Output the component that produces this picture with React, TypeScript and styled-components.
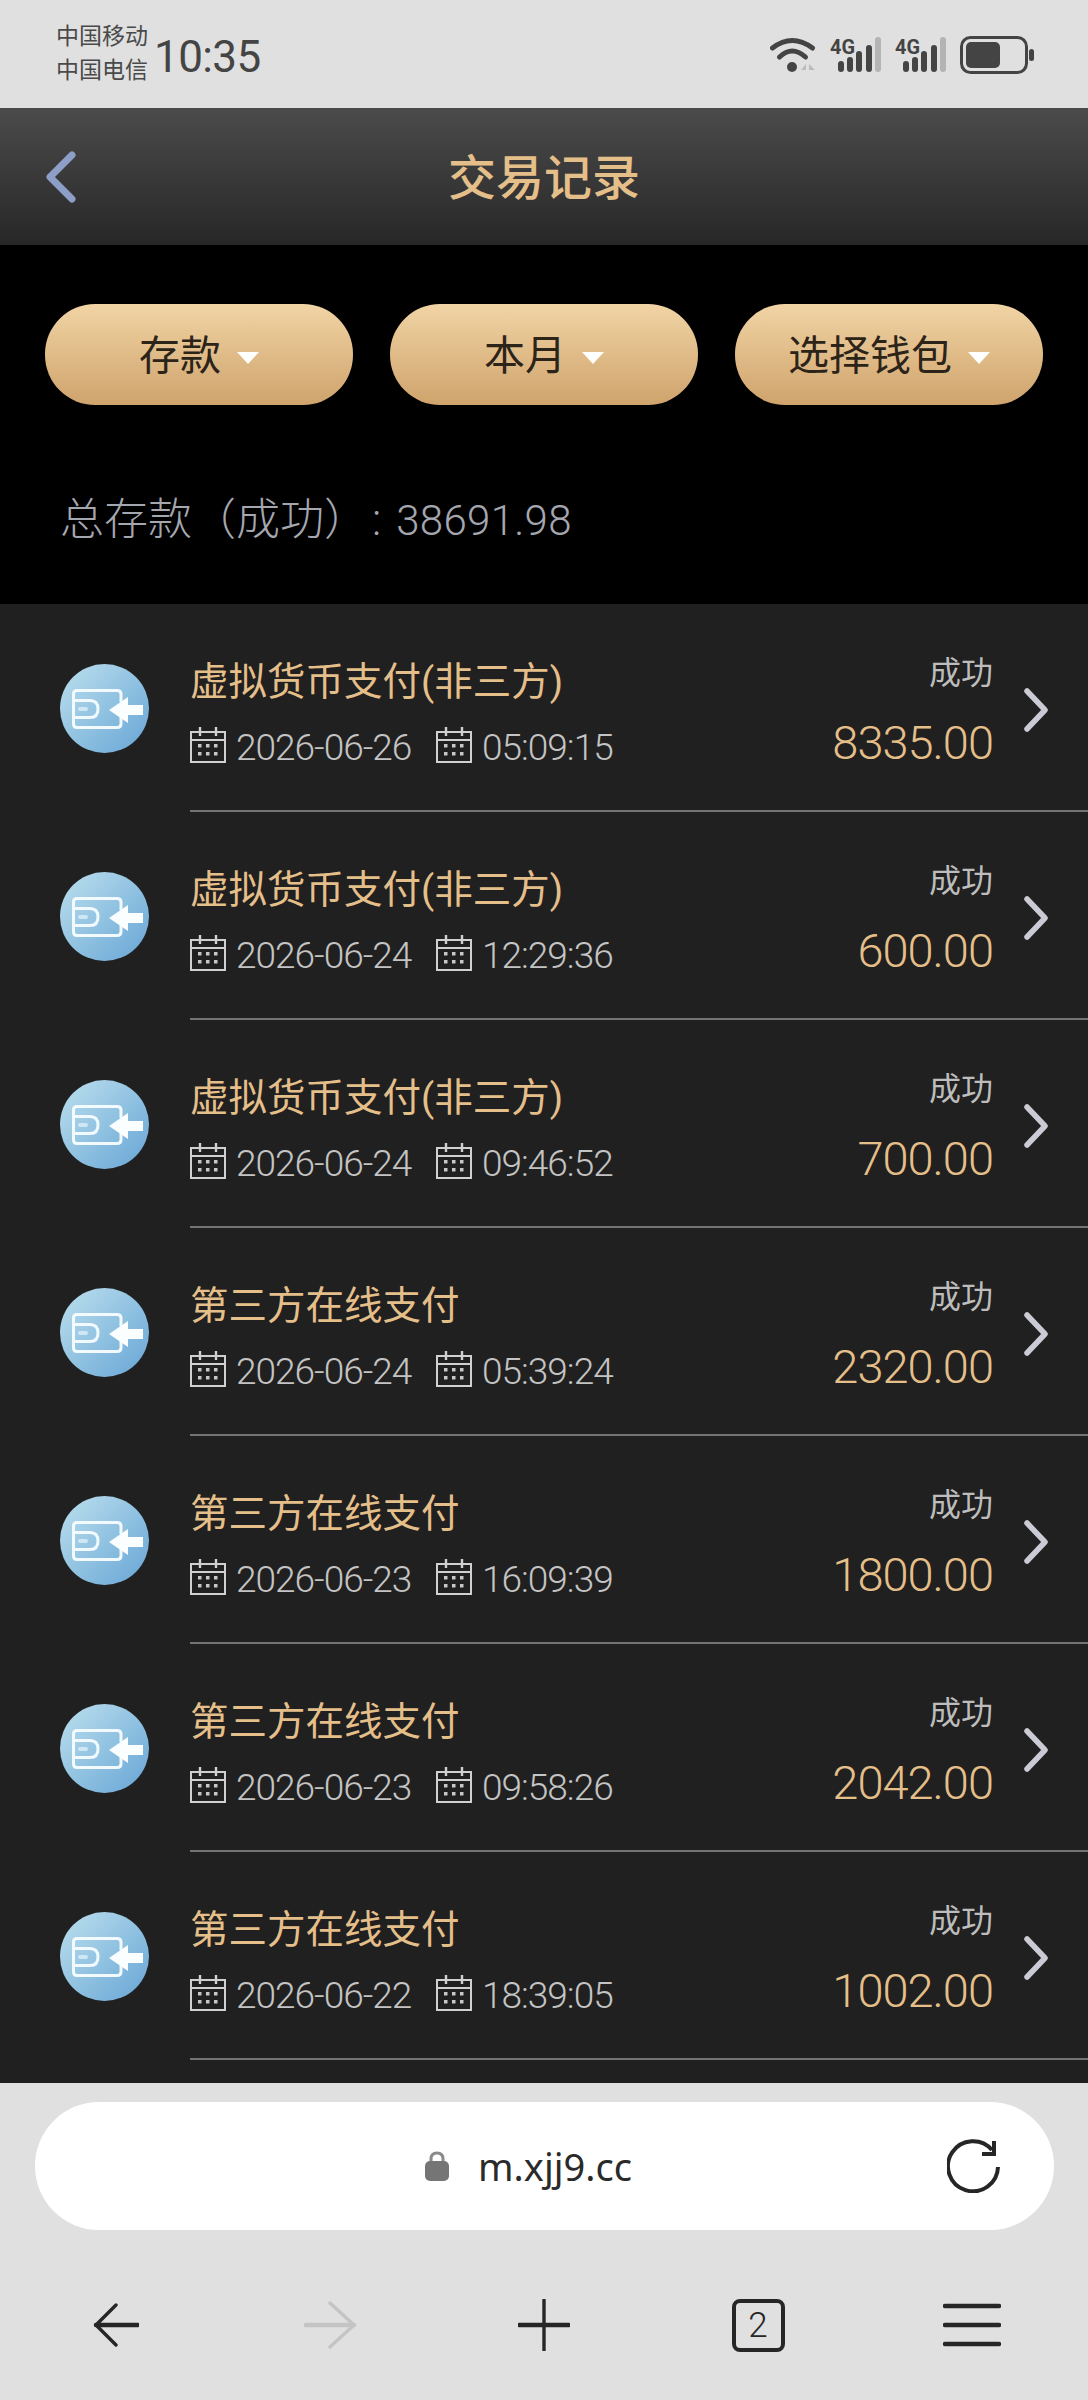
import React from 'react';
import styled, {createGlobalStyle} from 'styled-components';

const GlobalStyle = createGlobalStyle`
  html, body { margin: 0; padding: 0; background: #000; }
  * { box-sizing: border-box; }
  body { font-family: Roboto, "Noto Sans CJK SC", sans-serif; }
`;

const Page = styled.div`
  width: 1088px;
  height: 2400px;
  display: flex;
  flex-direction: column;
  overflow: hidden;
`;

const StatusBar = styled.div`
  height: 108px;
  background: #e0e0e0;
  color: #444;
  display: flex;
  align-items: center;
  padding: 0 54px 0 56px;
`;
const Carriers = styled.div`
  font-size: 23px;
  line-height: 34px;
  width: 100px;
  color: #4a4a4a;
`;
const Clock = styled.div`
  font-size: 44px;
  letter-spacing: -0.6px;
  color: #444;
  margin: 6px 0 0 -2px;
`;
const StatusIcons = styled.div`
  margin-left: auto;
  display: flex;
  align-items: center;
  gap: 14px;
  margin-top: 2px;
`;
const SignalSvg = styled.svg`
  margin-top: -8px;
`;

const Header = styled.div`
  height: 137px;
  background: linear-gradient(#4b4b4b, #272727);
  display: flex;
  align-items: center;
  justify-content: center;
  position: relative;
`;
const BackButton = styled.div`
  position: absolute;
  left: 45px;
  top: 42px;
  display: flex;
`;
const Title = styled.h1`
  margin: -6px 0 0;
  font-size: 48px;
  font-weight: 500;
  color: #e5bf89;
`;

const FilterPanel = styled.div`
  background: #000;
  height: 359px;
  padding: 59px 45px 0;
`;
const Filters = styled.div`
  display: flex;
  justify-content: space-between;
`;
const FilterButton = styled.div`
  width: 308px;
  height: 101px;
  border-radius: 50px;
  background: linear-gradient(#f1d4a5, #cfa36c);
  color: #2c2319;
  font-size: 41px;
  display: flex;
  align-items: center;
  justify-content: center;
  gap: 16px;
  padding-bottom: 5px;
`;
const Caret = styled.span`
  width: 0;
  height: 0;
  border-left: 11px solid transparent;
  border-right: 11px solid transparent;
  border-top: 12px solid #fff;
  margin-top: 11px;
`;
const Summary = styled.div`
  margin: 85px 0 0 15px;
  font-size: 44px;
  line-height: 60px;
  font-weight: 300;
  color: #a5a7b0;
  display: flex;
  align-items: baseline;
`;
const SummaryColon = styled.span`
  margin-left: 4px;
`;
const SummaryValue = styled.span`
  font-size: 42px;
  letter-spacing: 0.3px;
  margin-left: 15px;
`;

const List = styled.div`
  flex: 1;
  background: #202020;
  overflow: hidden;
`;
const Row = styled.div`
  display: flex;
  padding-left: 60px;
`;
const CoinIcon = styled.div`
  width: 89px;
  height: 89px;
  margin: 60px 41px 0 0;
  flex-shrink: 0;
  border-radius: 50%;
  background: linear-gradient(135deg, #bde0ee, #66a5d5);
  display: flex;
`;
const RowBody = styled.div`
  flex: 1;
  height: 208px;
  border-bottom: 2px solid #747474;
  display: flex;
`;
const RowInfo = styled.div`
  flex: 1;
  padding-top: 52px;
`;
const RowName = styled.div`
  font-size: 38.5px;
  line-height: 52px;
  color: #e5bf89;
`;
const RowMeta = styled.div`
  display: flex;
  align-items: center;
  margin-top: 12px;
  color: #c4c4c4;
  font-size: 37px;
  font-weight: 300;
  line-height: 44px;
  letter-spacing: -1px;
  white-space: nowrap;
`;
const MetaDate = styled.span`
  margin: 6px 24px 0 10px;
  width: 176px;
`;
const MetaTime = styled.span`
  margin: 6px 0 0 10px;
`;
const RowSide = styled.div`
  width: 200px;
  display: flex;
  flex-direction: column;
  align-items: flex-end;
  padding-top: 47px;
`;
const RowStatus = styled.div`
  font-size: 32px;
  line-height: 44px;
  color: #bdbdbd;
`;
const RowAmount = styled.div`
  font-size: 47px;
  font-weight: 300;
  line-height: 54px;
  letter-spacing: -1px;
  color: #e5bf89;
  margin-top: 21px;
`;
const RowChevron = styled.div`
  width: 95px;
  padding: 84px 0 0 31px;
`;

const BrowserBar = styled.div`
  height: 317px;
  background: #e0e0e0;
  padding-top: 19px;
`;
const UrlBar = styled.div`
  height: 128px;
  margin: 0 34px 0 35px;
  border-radius: 64px;
  background: #fff;
  display: flex;
  align-items: center;
  justify-content: center;
  position: relative;
  gap: 29px;
  padding-right: 32px;
`;
const UrlText = styled.span`
  font-family: "Noto Sans", sans-serif;
  font-size: 38px;
  color: #2a2a2a;
`;
const ReloadButton = styled.div`
  position: absolute;
  right: 53px;
  top: 37px;
  display: flex;
`;
const BrowserNav = styled.div`
  display: flex;
  padding: 67px 9px 0;
`;
const NavItem = styled.div`
  width: 214px;
  height: 56px;
  display: flex;
  align-items: center;
  justify-content: center;
`;
const TabCount = styled.div`
  width: 53px;
  height: 53px;
  border: 4px solid #262626;
  border-radius: 8px;
  display: flex;
  align-items: center;
  justify-content: center;
  font-size: 35px;
  font-weight: 300;
  color: #262626;
`;

const WifiIcon = () => (
  <svg width="46" height="36" viewBox="0 0 46 36" fill="none">
    <path d="M2.5 11 Q22 -4 42.5 11" stroke="#444" strokeWidth="5" strokeLinecap="round" />
    <path d="M9.5 20 Q22 8 35.5 20" stroke="#444" strokeWidth="5" strokeLinecap="round" />
    <circle cx="22" cy="30" r="5" fill="#444" />
    <path d="M36 27 L31 33 H36 Z M39 27 V33 H45 Z" fill="#bcbcbc" />
  </svg>
);

const SignalIcon = () => (
  <SignalSvg width="51" height="44" viewBox="0 -8 51 44">
    <text x="0" y="17" fontFamily="Roboto" fontSize="21" fontWeight="700" fill="#444" textLength="25" lengthAdjust="spacingAndGlyphs">4G</text>
    <rect x="8" y="24" width="6" height="11" rx="3" fill="#444" />
    <rect x="17" y="20" width="6" height="15" rx="3" fill="#444" />
    <rect x="26" y="14" width="6" height="21" rx="3" fill="#444" />
    <rect x="36" y="8" width="6" height="27" rx="3" fill="#444" />
    <rect x="45" y="0" width="6" height="35" rx="3" fill="#b4b4b4" />
  </SignalSvg>
);

const BatteryIcon = () => (
  <svg width="74" height="38" viewBox="0 0 74 38">
    <rect x="1.5" y="1.5" width="65" height="35" rx="9" fill="none" stroke="#444" strokeWidth="3" />
    <rect x="6" y="6" width="34" height="26" rx="5" fill="#444" />
    <rect x="69" y="13" width="5" height="12" rx="2.5" fill="#444" />
  </svg>
);

const WalletIcon = () => (
  <svg width="89" height="89" viewBox="0 0 89 89" fill="none">
    <path d="M61 38 V30 Q61 26.5 57 26.5 H17 Q13.5 26.5 13.5 30 V60 Q13.5 63.5 17 63.5 H57 Q61 63.5 61 60 V52" stroke="#f2fafd" strokeWidth="3" />
    <path d="M13.5 36.5 H30 Q38 36.5 38 45 Q38 53.5 30 53.5 H13.5" stroke="#f2fafd" strokeWidth="3" />
    <path d="M49 46 L68 33 V41 H83 V51 H68 V59 Z" fill="#fbfeff" />
    <rect x="18" y="43" width="10" height="4" rx="2" fill="#cfe6f3" />
  </svg>
);

const CalendarIcon = () => (
  <svg width="36" height="36" viewBox="0 0 36 36" fill="none">
    <path d="M1 35 V5 H35 V35 M0 35 H36" stroke="#d0d0d0" strokeWidth="2" />
    <path d="M10 0 V9 M26 0 V9" stroke="#d0d0d0" strokeWidth="2.4" />
    <path d="M1 13 H35" stroke="#d0d0d0" strokeWidth="2" />
    <g fill="#c8c8c8">
      <rect x="8" y="17" width="3.5" height="3.5" />
      <rect x="16" y="17" width="3.5" height="3.5" />
      <rect x="24" y="17" width="3.5" height="3.5" />
      <rect x="8" y="25" width="3.5" height="3.5" />
      <rect x="16" y="25" width="3.5" height="3.5" />
      <rect x="24" y="25" width="3.5" height="3.5" />
    </g>
  </svg>
);

const RightChevron = () => (
  <svg width="24" height="44" viewBox="0 0 24 44" fill="none">
    <path d="M3 3 L21 22 L3 41" stroke="#cbcbd6" strokeWidth="5.5" strokeLinecap="round" strokeLinejoin="round" />
  </svg>
);

const LockIcon = () => (
  <svg width="24" height="30" viewBox="0 0 24 30">
    <path d="M6 13 V8 Q6 2 12 2 Q18 2 18 8 V13" fill="none" stroke="#8a8a8a" strokeWidth="3" />
    <rect x="0" y="10" width="24" height="20" rx="5" fill="#757575" />
  </svg>
);

const ReloadIcon = () => (
  <svg width="54" height="54" viewBox="0 0 54 54" fill="none">
    <path d="M51 28 A25 25 0 1 1 45 11" stroke="#262626" strokeWidth="4" />
    <path d="M47 2 V15 H35" stroke="#262626" strokeWidth="4" />
  </svg>
);

const records = [
  {name: '虚拟货币支付(非三方)', date: '2026-06-26', time: '05:09:15', amount: '8335.00'},
  {name: '虚拟货币支付(非三方)', date: '2026-06-24', time: '12:29:36', amount: '600.00'},
  {name: '虚拟货币支付(非三方)', date: '2026-06-24', time: '09:46:52', amount: '700.00'},
  {name: '第三方在线支付', date: '2026-06-24', time: '05:39:24', amount: '2320.00'},
  {name: '第三方在线支付', date: '2026-06-23', time: '16:09:39', amount: '1800.00'},
  {name: '第三方在线支付', date: '2026-06-23', time: '09:58:26', amount: '2042.00'},
  {name: '第三方在线支付', date: '2026-06-22', time: '18:39:05', amount: '1002.00'},
];

const App: React.FC = () => {
  return (
    <Page>
      <GlobalStyle />
      <StatusBar>
        <Carriers>中国移动<br />中国电信</Carriers>
        <Clock>10:35</Clock>
        <StatusIcons>
          <WifiIcon />
          <SignalIcon />
          <SignalIcon />
          <BatteryIcon />
        </StatusIcons>
      </StatusBar>

      <Header>
        <BackButton>
          <svg width="32" height="54" viewBox="0 0 32 54" fill="none">
            <path d="M27 5 L5 27 L27 49" stroke="#8d9ec7" strokeWidth="7" strokeLinecap="round" strokeLinejoin="round" />
          </svg>
        </BackButton>
        <Title>交易记录</Title>
      </Header>

      <FilterPanel>
        <Filters>
          <FilterButton>存款<Caret /></FilterButton>
          <FilterButton>本月<Caret /></FilterButton>
          <FilterButton>选择钱包<Caret /></FilterButton>
        </Filters>
        <Summary>
          总存款（成功）<SummaryColon>:</SummaryColon><SummaryValue>38691.98</SummaryValue>
        </Summary>
      </FilterPanel>

      <List>
        {records.map((r) => (
          <Row key={r.date + r.time}>
            <CoinIcon><WalletIcon /></CoinIcon>
            <RowBody>
              <RowInfo>
                <RowName>{r.name}</RowName>
                <RowMeta>
                  <CalendarIcon />
                  <MetaDate>{r.date}</MetaDate>
                  <CalendarIcon />
                  <MetaTime>{r.time}</MetaTime>
                </RowMeta>
              </RowInfo>
              <RowSide>
                <RowStatus>成功</RowStatus>
                <RowAmount>{r.amount}</RowAmount>
              </RowSide>
              <RowChevron><RightChevron /></RowChevron>
            </RowBody>
          </Row>
        ))}
      </List>

      <BrowserBar>
        <UrlBar>
          <LockIcon />
          <UrlText>m.xjj9.cc</UrlText>
          <ReloadButton><ReloadIcon /></ReloadButton>
        </UrlBar>
        <BrowserNav>
          <NavItem>
            <svg width="46" height="44" viewBox="0 0 46 44" fill="none">
              <path d="M23 2 L3 22 L23 42" stroke="#262626" strokeWidth="3.4" strokeLinecap="round" strokeLinejoin="round" />
              <path d="M3 22 H45" stroke="#262626" strokeWidth="4.5" strokeLinecap="round" />
            </svg>
          </NavItem>
          <NavItem>
            <svg width="52" height="48" viewBox="0 0 52 48" fill="none">
              <path d="M26 2 L50 24 L26 46" stroke="#c4c4c4" strokeWidth="3.4" strokeLinecap="round" strokeLinejoin="round" />
              <path d="M2 24 H50" stroke="#c4c4c4" strokeWidth="4.5" strokeLinecap="round" />
            </svg>
          </NavItem>
          <NavItem>
            <svg width="52" height="52" viewBox="0 0 52 52" fill="none">
              <path d="M26 1 V51" stroke="#262626" strokeWidth="3.4" strokeLinecap="round" />
              <path d="M1 26 H51" stroke="#262626" strokeWidth="4.5" strokeLinecap="round" />
            </svg>
          </NavItem>
          <NavItem>
            <TabCount>2</TabCount>
          </NavItem>
          <NavItem>
            <svg width="58" height="44" viewBox="0 0 58 44" fill="none">
              <path d="M2 3 H56 M2 22 H56 M2 41 H56" stroke="#262626" strokeWidth="4.4" strokeLinecap="round" />
            </svg>
          </NavItem>
        </BrowserNav>
      </BrowserBar>
    </Page>
  );
};

export default App;
